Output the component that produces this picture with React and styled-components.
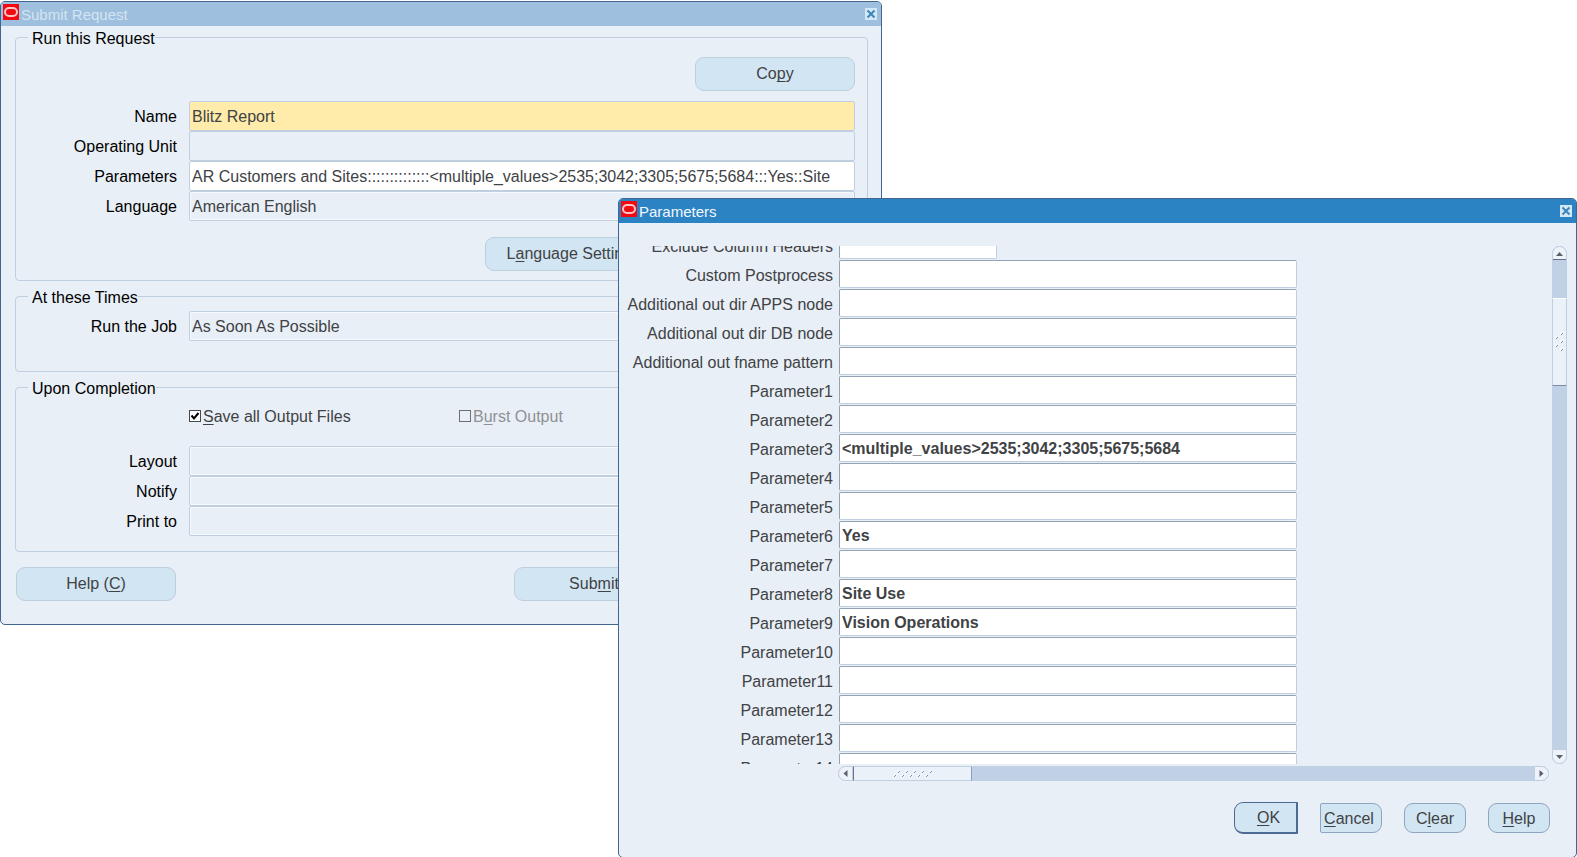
import React, { useLayoutEffect, useRef } from 'react'
import styled, { createGlobalStyle, css } from 'styled-components'

const colors = {
  face: '#e9eff6',
  line: '#c0cfe0',
  edge: '#41668f',
  button: '#d2e5f2',
  buttonLine: '#bccfdf',
  text: '#404245',
  track: '#c0d1e6',
  required: '#ffecaa'
}

const GlobalStyle = createGlobalStyle`
  * {
    box-sizing: border-box;
  }
  body {
    margin: 0;
    background: #fff;
    overflow: hidden;
  }
  body,
  button,
  input {
    font-family: 'Liberation Sans', Arial, sans-serif;
    font-size: 16px;
    line-height: 20px;
    color: ${colors.text};
  }
  u {
    text-underline-offset: 2px;
    text-decoration-thickness: 1px;
    text-decoration-skip-ink: none;
  }
`

const Desktop = styled.div`
  position: relative;
  min-height: 100vh;
  overflow: hidden;
`

const Window = styled.section`
  position: absolute;
  background: ${colors.face};
  border: 1px solid ${colors.edge};
  border-radius: 5px;
  overflow: hidden;
`

const RequestWindow = styled(Window)`
  top: 1px;
  left: 0;
  width: calc(100vw - 695px);
  min-width: 700px;
`

const ParametersWindow = styled(Window)`
  top: 198px;
  left: 618px;
  right: 0;
  min-width: 700px;
`

const TitleBar = styled.header`
  display: flex;
  align-items: center;
  height: 24px;
  padding: 0 4px 0 2px;
  color: ${props => (props.$active ? '#f4f8fc' : '#d5e4f1')};
  background: ${props => (props.$active ? '#2c83c4' : '#9ebfde')};
`

const Title = styled.h1`
  flex: 1;
  margin: 0;
  padding: 1px 0 0 2px;
  font-size: 15px;
  font-weight: normal;
  line-height: 20px;
`

const Logo = styled.svg`
  align-self: flex-start;
  margin-top: 2px;
`

const CloseButton = styled.button`
  display: flex;
  width: 12px;
  height: 12px;
  padding: 0;
  border: 0;
  background: #d3e8f6;
`

const TitleRow = ({ title, active }) => (
  <TitleBar $active={active}>
    <Logo width="16" height="16" viewBox="0 0 16 16" aria-hidden="true">
      <rect width="16" height="16" fill="#f20a12" />
      <rect
        x="2"
        y="4"
        width="12"
        height="8"
        rx="4"
        fill="none"
        stroke="#ffc4c4"
        strokeWidth="2"
      />
    </Logo>
    <Title>{title}</Title>
    <CloseButton aria-label={`Close ${title}`}>
      <svg width="12" height="12" viewBox="0 0 12 12">
        <path d="M2.5 2.5l7 7m0-7l-7 7" stroke="#3b86bb" strokeWidth="2" />
      </svg>
    </CloseButton>
  </TitleBar>
)

const RequestForm = styled.form`
  display: flex;
  flex-direction: column;
  gap: 4px;
  padding: 0 13px 23px 14px;
`

const Group = styled.fieldset`
  min-width: 0;
  margin: 0;
  padding: 0 12px ${props => props.$bottom}px 0;
  border: 1px solid ${colors.line};
  border-radius: 4px;
`

const Legend = styled.legend`
  margin-left: 12px;
  padding: 3px 0 0 4px;
  color: #000;
`

const Fields = styled.div`
  display: grid;
  grid-template-columns: 161px minmax(0, 1fr);
  column-gap: 12px;
  margin-top: ${props => props.$top || 0}px;
`

const Label = styled.label`
  padding-top: 6px;
  text-align: right;
  color: #000;
`

const Field = styled.input`
  width: 100%;
  height: 30px;
  padding: 2px 2px 0;
  border: 1px solid ${colors.line};
  border-radius: 2px;
  background: ${props => props.$fill || colors.face};
  outline: none;
  ${props =>
    props.$raised &&
    css`
      box-shadow: inset 0 0 0 1px #f7fafd;
    `}
`

const FormField = ({ id, label, value = '', fill, raised }) => (
  <>
    <Label htmlFor={id}>{label}</Label>
    <Field id={id} defaultValue={value} $fill={fill} $raised={raised} />
  </>
)

const Actions = styled.div`
  display: flex;
  align-items: center;
  justify-content: ${props => props.$justify || 'flex-end'};
  gap: ${props => props.$gap || 22}px;
  padding: ${props => props.$pad || '0'};
`

const Button = styled.button`
  width: ${props => props.$width || 160}px;
  height: 34px;
  padding: 0;
  border: 1px solid ${colors.buttonLine};
  border-radius: 9px;
  background: ${colors.button};
`

const DialogButton = styled(Button)`
  width: 62px;
  height: 30px;
  padding-top: 1px;
  border-color: #8ea5c0;
  ${props =>
    props.$square &&
    css`
      padding-right: 4px;
      border-radius: 2px 9px 9px 2px;
    `}
  ${props =>
    props.$primary &&
    css`
      width: 64px;
      height: 32px;
      padding-left: 6px;
      border: 1px solid #4d6a95;
      border-right-width: 2px;
      border-bottom-width: 2px;
      border-radius: 9px 1px 1px 9px;
    `}
`

const Checks = styled.div`
  display: grid;
  grid-template-columns: 270px auto;
  margin: 8px 0 0 173px;
`

const Check = styled.label`
  display: flex;
  align-items: center;
  gap: 2px;
  color: ${props => (props.$disabled ? '#8f9194' : colors.text)};
`

const CheckBox = styled.input.attrs({ type: 'checkbox' })`
  appearance: none;
  width: 12px;
  height: 12px;
  margin: 0 0 2px;
  border: 1px solid #6b6e72;
  background-color: ${colors.face};
  &:checked {
    border-color: #46494d;
    background: #fff
      url("data:image/svg+xml,%3Csvg xmlns='http://www.w3.org/2000/svg' viewBox='0 0 10 10'%3E%3Cpath d='M1.5 4.5l2.5 3 4.5-5.5' fill='none' stroke='black' stroke-width='2'/%3E%3C/svg%3E");
  }
`

const DialogBody = styled.div`
  display: grid;
  grid-template-columns: minmax(0, 1fr) 15px;
  gap: 2px 3px;
  padding: 23px 9px 0 1px;
`

const Viewport = styled.div`
  height: 518px;
  overflow: hidden;
`

const ParameterGrid = styled.div`
  display: grid;
  grid-template-columns: 213px minmax(0, 458px);
  grid-auto-rows: 28px;
  gap: 1px 6px;
`

const ParameterLabel = styled(Label)`
  color: ${colors.text};
`

const ParameterField = styled(Field)`
  width: ${props => (props.$short ? '158px' : '100%')};
  height: 28px;
  border-color: #93a3b5 ${colors.line} ${colors.line} #93a3b5;
  background: #fff;
  font-weight: bold;
`

const ScrollBar = styled.div`
  display: flex;
  flex-direction: ${props => (props.$vertical ? 'column' : 'row')};
  border-radius: 8px;
  background: ${colors.track};
  ${props =>
    !props.$vertical &&
    css`
      height: 15px;
      margin-left: 218px;
    `}
`

const Arrow = styled.button`
  display: flex;
  flex: none;
  width: 15px;
  height: 15px;
  padding: 0;
  border: 1px solid ${colors.line};
  background: #eef3fa;
  border-radius: ${props => props.$round};
`

const Thumb = styled.div`
  display: flex;
  flex: none;
  align-items: center;
  justify-content: center;
  border: 1px solid ${colors.line};
  background: #eaf1f8;
  ${props =>
    props.$vertical
      ? css`
          height: 88px;
          margin-top: 37px;
          border-top-color: #fff;
          border-bottom-color: #7d8ba5;
        `
      : css`
          width: 119px;
          border-left-color: #66758f;
          border-right-color: #8b9fc0;
        `}
`

const Spacer = styled.span`
  flex: 1;
`

const arrows = {
  up: 'M3 9h7L6.5 5z',
  down: 'M3 5h7L6.5 9z',
  left: 'M8.5 3v7L4.5 6.5z',
  right: 'M4.5 3v7L8.5 6.5z'
}

const rounds = {
  up: '8px 8px 0 0',
  down: '0 0 8px 8px',
  left: '8px 0 0 8px',
  right: '0 8px 8px 0'
}

const ScrollArrow = ({ dir }) => (
  <Arrow type="button" aria-label={`Scroll ${dir}`} $round={rounds[dir]}>
    <svg width="13" height="13" viewBox="0 0 13 13">
      <path d={arrows[dir]} fill="#5a606c" />
      {dir === 'up' && <path d="M0 12.500h13" stroke="#66708a" />}
    </svg>
  </Arrow>
)

const Grip = ({ dots, width, height }) => (
  <svg width={width} height={height} aria-hidden="true">
    {dots.map(([x, y]) => (
      <g key={`${x}-${y}`} strokeWidth="1">
        <path d={`M${x} ${y + 2}l2-2`} stroke="#8291ad" />
        <path d={`M${x - 1} ${y + 1}l2-2`} stroke="#fff" />
      </g>
    ))}
  </svg>
)

const wideDots = [0, 1, 2, 3, 4].flatMap(i => [[1 + i * 8, 5], [5 + i * 8, 1]])
const tallDots = [[6, 1], [1, 5], [6, 9], [1, 13], [6, 17]]

const values = {
  3: '<multiple_values>2535;3042;3305;5675;5684',
  6: 'Yes',
  8: 'Site Use',
  9: 'Vision Operations'
}

const parameters = [
  { label: 'Exclude Column Headers', short: true },
  { label: 'Custom Postprocess' },
  { label: 'Additional out dir APPS node' },
  { label: 'Additional out dir DB node' },
  { label: 'Additional out fname pattern' },
  ...Array.from({ length: 14 }, (_, i) => ({
    label: `Parameter${i + 1}`,
    value: values[i + 1]
  }))
]

const SubmitRequest = () => (
  <RequestWindow>
    <TitleRow title="Submit Request" />
    <RequestForm onSubmit={e => e.preventDefault()}>
      <Group $bottom={9}>
        <Legend>Run this Request</Legend>
        <Actions $pad="8px 0 10px">
          <Button>
            Co<u>p</u>y
          </Button>
        </Actions>
        <Fields>
          <FormField
            id="name"
            label="Name"
            value="Blitz Report"
            fill={colors.required}
          />
          <FormField id="unit" label="Operating Unit" />
          <FormField
            id="params"
            label="Parameters"
            value="AR Customers and Sites::::::::::::::<multiple_values>2535;3042;3305;5675;5684:::Yes::Site"
            fill="#fff"
          />
          <FormField
            id="lang"
            label="Language"
            value="American English"
            raised
          />
        </Fields>
        <Actions $pad="16px 0 0" $gap={20}>
          <Button $width={190}>
            L<u>a</u>nguage Settings...
          </Button>
          <Button>
            De<u>b</u>ug Options
          </Button>
        </Actions>
      </Group>
      <Group $bottom={30}>
        <Legend>At these Times</Legend>
        <Fields $top={3}>
          <FormField
            id="job"
            label="Run the Job"
            value="As Soon As Possible"
            raised
          />
        </Fields>
      </Group>
      <Group $bottom={15}>
        <Legend>Upon Completion</Legend>
        <Checks>
          <Check>
            <CheckBox defaultChecked />
            <span>
              <u>S</u>ave all Output Files
            </span>
          </Check>
          <Check $disabled>
            <CheckBox disabled />
            <span>
              B<u>u</u>rst Output
            </span>
          </Check>
        </Checks>
        <Fields $top={19}>
          <FormField id="layout" label="Layout" raised />
          <FormField id="notify" label="Notify" raised />
          <FormField id="print" label="Print to" raised />
        </Fields>
      </Group>
      <Actions $justify="space-between" $pad="11px 14px 0 1px">
        <Button type="button">
          Help (<u>C</u>)
        </Button>
        <Actions $gap={20}>
          <Button>
            Sub<u>m</u>it
          </Button>
          <Button type="button">Cancel</Button>
        </Actions>
      </Actions>
    </RequestForm>
  </RequestWindow>
)

const Parameters = () => {
  const viewport = useRef(null)

  // the list opens scrolled half a row down
  useLayoutEffect(() => {
    viewport.current.scrollTop = 15
  }, [])

  return (
    <ParametersWindow>
      <TitleRow title="Parameters" active />
      <DialogBody>
        <Viewport ref={viewport}>
          <ParameterGrid>
            {parameters.map(({ label, value, short }) => (
              <React.Fragment key={label}>
                <ParameterLabel htmlFor={label}>{label}</ParameterLabel>
                <ParameterField id={label} defaultValue={value} $short={short} />
              </React.Fragment>
            ))}
          </ParameterGrid>
        </Viewport>
        <ScrollBar $vertical>
          <ScrollArrow dir="up" />
          <Thumb $vertical>
            <Grip dots={tallDots} width={10} height={20} />
          </Thumb>
          <Spacer />
          <ScrollArrow dir="down" />
        </ScrollBar>
        <ScrollBar>
          <ScrollArrow dir="left" />
          <Thumb>
            <Grip dots={wideDots} width={40} height={8} />
          </Thumb>
          <Spacer />
          <ScrollArrow dir="right" />
        </ScrollBar>
      </DialogBody>
      <Actions $pad="21px 26px 23px">
        <DialogButton $primary>
          <u>O</u>K
        </DialogButton>
        <DialogButton $square>
          <u>C</u>ancel
        </DialogButton>
        <DialogButton>
          C<u>l</u>ear
        </DialogButton>
        <DialogButton>
          <u>H</u>elp
        </DialogButton>
      </Actions>
    </ParametersWindow>
  )
}

export default () => (
  <Desktop>
    <GlobalStyle />
    <SubmitRequest />
    <Parameters />
  </Desktop>
)
